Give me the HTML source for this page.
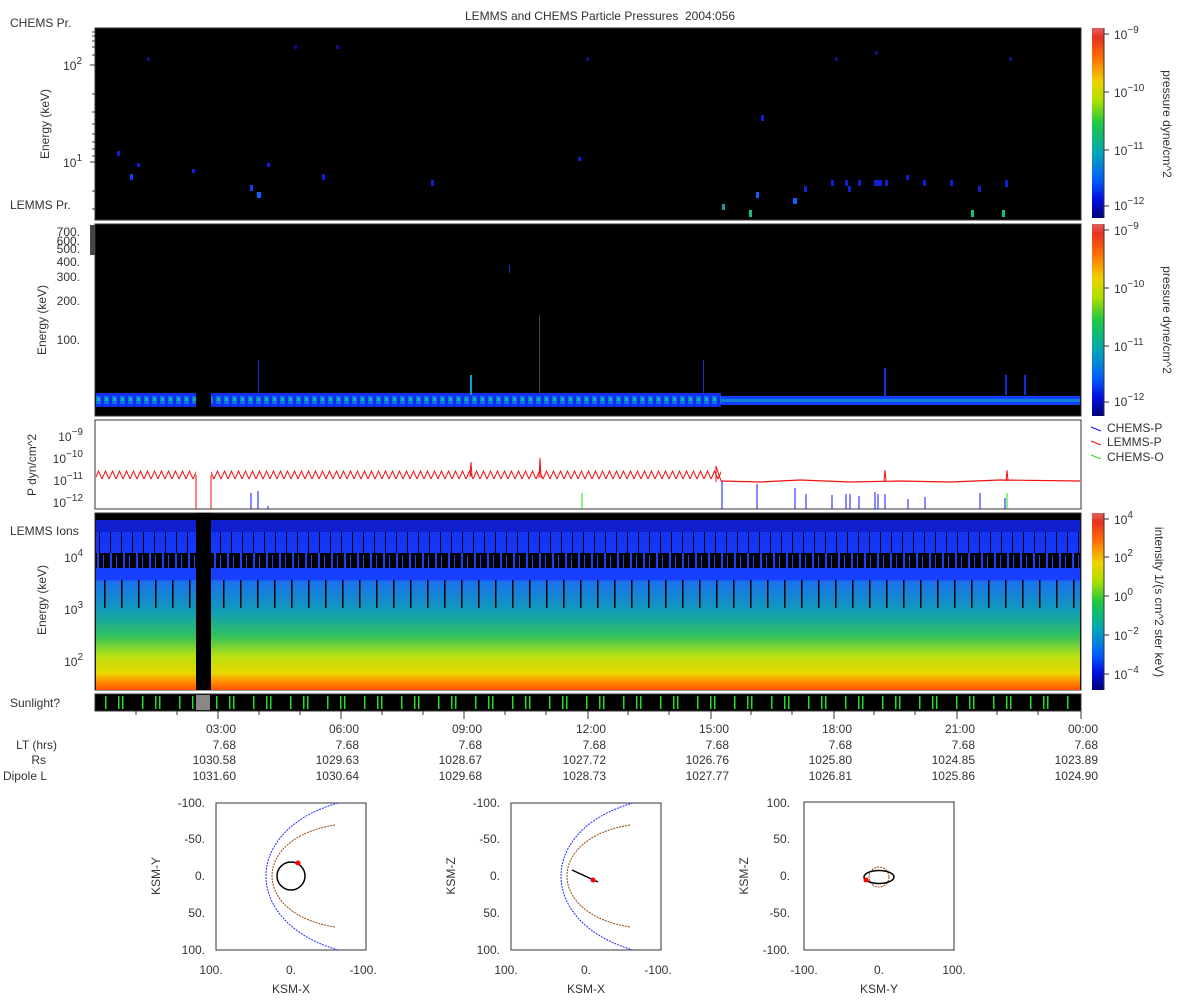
<!DOCTYPE html>
<html><head><meta charset="utf-8"><style>
html,body{margin:0;padding:0;background:#fff;}
svg{display:block;font-family:"Liberation Sans",sans-serif;}
text{fill:#333;font-size:12px;}
</style></head><body>
<svg width="1200" height="1000" viewBox="0 0 1200 1000" xmlns="http://www.w3.org/2000/svg">
<defs>
<linearGradient id="cb" x1="0" y1="1" x2="0" y2="0">
<stop offset="0" stop-color="#00007a"/><stop offset="0.1" stop-color="#0010e0"/><stop offset="0.2" stop-color="#0060ff"/><stop offset="0.35" stop-color="#00a8b0"/><stop offset="0.5" stop-color="#20c840"/><stop offset="0.62" stop-color="#b0e000"/><stop offset="0.72" stop-color="#f0d000"/><stop offset="0.84" stop-color="#ff7000"/><stop offset="0.95" stop-color="#e83020"/><stop offset="1" stop-color="#e06060"/>
</linearGradient>
<linearGradient id="ions" x1="0" y1="0" x2="0" y2="1">
<stop offset="0" stop-color="#1030f0"/><stop offset="0.35" stop-color="#1840ff"/><stop offset="0.36" stop-color="#1a70f0"/><stop offset="0.55" stop-color="#10a0b0"/><stop offset="0.68" stop-color="#30c060"/><stop offset="0.8" stop-color="#b8e010"/><stop offset="0.9" stop-color="#e8d800"/><stop offset="0.95" stop-color="#ff9000"/><stop offset="1" stop-color="#ff5000"/>
</linearGradient>
<pattern id="band" width="8" height="14" patternUnits="userSpaceOnUse" x="95" y="393">
<rect width="8" height="14" fill="#1030f0"/><rect x="1" y="3" width="5" height="8" fill="#1070e0"/><rect x="2" y="5" width="3" height="3" fill="#10b0b0"/>
</pattern>
<pattern id="zig" width="7" height="16" patternUnits="userSpaceOnUse" x="95" y="468">
<path d="M0,11 L3.5,3 L7,11" fill="none" stroke="#f01010" stroke-width="1"/>
</pattern>
<pattern id="blk" width="13" height="30" patternUnits="userSpaceOnUse" x="95" y="550">
<rect width="13" height="30" fill="#000"/><rect x="2" width="2" height="30" fill="#1840ff"/><rect x="8" y="5" width="1" height="20" fill="#1840ff"/>
</pattern>
<pattern id="vs" width="11" height="60" patternUnits="userSpaceOnUse" x="95" y="520">
<rect x="4" y="8" width="1" height="25" fill="#000"/>
</pattern>
<pattern id="vs2" width="17" height="90" patternUnits="userSpaceOnUse" x="95" y="520">
<rect x="9" y="60" width="1.5" height="28" fill="#000"/>
</pattern>
<pattern id="sun" width="37" height="17" patternUnits="userSpaceOnUse" x="100" y="694">
<rect x="5" y="2" width="1.5" height="13" fill="#20e020"/><rect x="18" y="2" width="1.5" height="13" fill="#20e020"/><rect x="22" y="2" width="1.5" height="13" fill="#20e020"/>
</pattern>
</defs>

<text x="600" y="20" text-anchor="middle" xml:space="preserve">LEMMS and CHEMS Particle Pressures  2004:056</text>

<!-- Panel 1 -->
<text x="10" y="27">CHEMS Pr.</text>
<rect x="95" y="28" width="986" height="192" fill="#000" stroke="#333"/>
<g fill="#1020d0">
<rect x="117" y="151" width="3" height="5"/><rect x="130" y="174" width="3" height="6" fill="#1040ff"/><rect x="137" y="163" width="3" height="4"/><rect x="147" y="57" width="3" height="4" fill="#0a1080"/><rect x="192" y="169" width="3" height="4"/><rect x="250" y="185" width="3" height="6" fill="#1040ff"/><rect x="257" y="192" width="4" height="6" fill="#1060ff"/><rect x="267" y="163" width="3" height="4"/><rect x="294" y="45" width="3" height="4" fill="#0a1080"/><rect x="322" y="174" width="3" height="6"/><rect x="336" y="45" width="3" height="4" fill="#0a1080"/><rect x="431" y="180" width="3" height="6"/><rect x="578" y="157" width="3" height="4"/><rect x="586" y="57" width="3" height="4" fill="#0a1080"/><rect x="722" y="204" width="3" height="6" fill="#10a0a0"/><rect x="749" y="210" width="3" height="7" fill="#10c080"/><rect x="756" y="192" width="3" height="6" fill="#1060ff"/><rect x="761" y="115" width="3" height="6"/><rect x="793" y="198" width="4" height="6" fill="#1060ff"/><rect x="804" y="186" width="3" height="6"/><rect x="831" y="180" width="3" height="6"/><rect x="835" y="57" width="3" height="4" fill="#0a1080"/><rect x="845" y="180" width="3" height="6"/><rect x="848" y="186" width="3" height="6"/><rect x="858" y="180" width="3" height="6"/><rect x="875" y="51" width="3" height="4" fill="#0a1080"/><rect x="874" y="180" width="8" height="6"/><rect x="885" y="180" width="3" height="6"/><rect x="906" y="175" width="3" height="5"/><rect x="923" y="180" width="3" height="6"/><rect x="950" y="180" width="3" height="6"/><rect x="971" y="210" width="3" height="7" fill="#10c080"/><rect x="978" y="186" width="3" height="6"/><rect x="1002" y="210" width="3" height="7" fill="#10c080"/><rect x="1005" y="180" width="3" height="7"/><rect x="1009" y="57" width="3" height="4" fill="#0a1080"/>
</g>
<g stroke="#333"><path d="M90,65h5M90,162h5M92,32h3M92,36h3M92,41h3M92,47h3M92,55h3M92,94h3M92,112h3M92,124h3M92,134h3M92,142h3M92,149h3M92,156h3M92,191h3M92,209h3"/></g>
<text x="82" y="70" text-anchor="end">10<tspan dy="-6" font-size="10">2</tspan></text>
<text x="82" y="167" text-anchor="end">10<tspan dy="-6" font-size="10">1</tspan></text>
<text transform="translate(49,124) rotate(-90)" text-anchor="middle">Energy (keV)</text>
<text x="10" y="209">LEMMS Pr.</text>

<!-- Panel 2 -->
<rect x="95" y="224" width="986" height="192" fill="#000" stroke="#333"/>
<rect x="96" y="393" width="100" height="14" fill="url(#band)"/>
<rect x="211" y="393" width="510" height="14" fill="url(#band)"/>
<rect x="721" y="396" width="359" height="9" fill="#1040ff"/>
<rect x="721" y="399" width="359" height="3" fill="#1080d0"/>
<g fill="#1030e0"><rect x="258" y="360" width="1" height="35"/><rect x="470" y="375" width="2" height="20" fill="#10a0d0"/><rect x="509" y="265" width="1" height="8"/><rect x="539" y="315" width="1" height="80" fill="#404060"/><rect x="884" y="368" width="2" height="28"/><rect x="1005" y="375" width="2" height="20"/><rect x="1024" y="375" width="2" height="20"/><rect x="703" y="360" width="1" height="35"/></g>
<rect x="90" y="225" width="5" height="30" fill="#444"/>
<g text-anchor="end">
<text x="80" y="236">700.</text><text x="80" y="245">600.</text><text x="80" y="253">500.</text><text x="80" y="266">400.</text><text x="80" y="281">300.</text><text x="80" y="305">200.</text><text x="80" y="344">100.</text>
</g>
<text transform="translate(46,320) rotate(-90)" text-anchor="middle">Energy (keV)</text>

<!-- Panel 3 -->
<rect x="95" y="420" width="986" height="89" fill="#fff" stroke="#333"/>
<rect x="96" y="468" width="100" height="16" fill="url(#zig)"/>
<rect x="211" y="468" width="510" height="16" fill="url(#zig)"/>
<path d="M721,481 L760,482 L800,480 L850,482 L900,481 L950,482 L1000,480 L1080,481" stroke="#f01010" stroke-width="1.2" fill="none"/>
<path d="M196,475 L196,509 M211,475 L211,509 M716,482 L716,466 L721,481 M539,478 L540,458 L541,478 M470,477 L471,462 L472,477 M884,481 L885,470 L886,481 M1006,481 L1007,470 L1008,481" stroke="#f01010" fill="none"/>
<g stroke="#1010ff"><path d="M251,509V493M258,509V491M268,509V506M722,509V481M757,509V484M795,509V488M806,509V494M832,509V495M846,509V494M850,509V494M859,509V496M875,509V492M878,509V494M885,509V494M908,509V499M925,509V497M980,509V493M1005,509V498"/></g>
<path d="M582,509V493 M1007,509V493" stroke="#20e020"/>
<g text-anchor="end">
<text x="83" y="441">10<tspan dy="-6" font-size="10">−9</tspan></text>
<text x="83" y="463">10<tspan dy="-6" font-size="10">−10</tspan></text>
<text x="83" y="485">10<tspan dy="-6" font-size="10">−11</tspan></text>
<text x="83" y="507">10<tspan dy="-6" font-size="10">−12</tspan></text>
</g>
<text transform="translate(36,465) rotate(-90)" text-anchor="middle">P dyn/cm^2</text>
<path d="M1091,427l10,4" stroke="#1010ff"/><text x="1107" y="432">CHEMS-P</text>
<path d="M1091,441l10,4" stroke="#f01010"/><text x="1107" y="446">LEMMS-P</text>
<path d="M1091,455l10,4" stroke="#20e020"/><text x="1107" y="461">CHEMS-O</text>

<!-- Panel 4 -->
<rect x="95" y="513" width="986" height="177" fill="#000" stroke="#333"/>
<rect x="96" y="520" width="984" height="170" fill="url(#ions)"/>
<rect x="96" y="520" width="984" height="12" fill="#1020d0"/>
<rect x="96" y="553" width="984" height="15" fill="url(#blk)"/>
<rect x="96" y="532" width="984" height="50" fill="url(#vs)"/>
<rect x="96" y="520" width="984" height="100" fill="url(#vs2)"/>
<rect x="196" y="513" width="15" height="177" fill="#000"/>
<text x="10" y="535">LEMMS Ions</text>
<g text-anchor="end">
<text x="83" y="562">10<tspan dy="-6" font-size="10">4</tspan></text>
<text x="83" y="614">10<tspan dy="-6" font-size="10">3</tspan></text>
<text x="83" y="666">10<tspan dy="-6" font-size="10">2</tspan></text>
</g>
<text transform="translate(46,600) rotate(-90)" text-anchor="middle">Energy (keV)</text>

<!-- Sunlight -->
<text x="10" y="707">Sunlight?</text>
<rect x="95" y="694" width="986" height="17" fill="#000" stroke="#333"/>
<rect x="96" y="696" width="984" height="13" fill="url(#sun)"/>
<rect x="196" y="695" width="14" height="15" fill="#888"/>

<!-- x ticks -->
<g stroke="#333">
<path d="M136,711v4M177,711v4M259,711v4M300,711v4M382,711v4M423,711v4M505,711v4M546,711v4M628,711v4M669,711v4M751,711v4M792,711v4M874,711v4M915,711v4M997,711v4M1038,711v4"/>
<path d="M218,711v8M341,711v8M464,711v8M588,711v8M711,711v8M834,711v8M957,711v8M1081,711v8"/>
</g>
<g text-anchor="end">
<text x="236" y="733">03:00</text><text x="359" y="733">06:00</text><text x="482" y="733">09:00</text><text x="606" y="733">12:00</text><text x="729" y="733">15:00</text><text x="852" y="733">18:00</text><text x="975" y="733">21:00</text><text x="1098" y="733">00:00</text>
<text x="236" y="749">7.68</text><text x="359" y="749">7.68</text><text x="482" y="749">7.68</text><text x="606" y="749">7.68</text><text x="729" y="749">7.68</text><text x="852" y="749">7.68</text><text x="975" y="749">7.68</text><text x="1098" y="749">7.68</text>
<text x="236" y="764">1030.58</text><text x="359" y="764">1029.63</text><text x="482" y="764">1028.67</text><text x="606" y="764">1027.72</text><text x="729" y="764">1026.76</text><text x="852" y="764">1025.80</text><text x="975" y="764">1024.85</text><text x="1098" y="764">1023.89</text>
<text x="236" y="780">1031.60</text><text x="359" y="780">1030.64</text><text x="482" y="780">1029.68</text><text x="606" y="780">1028.73</text><text x="729" y="780">1027.77</text><text x="852" y="780">1026.81</text><text x="975" y="780">1025.86</text><text x="1098" y="780">1024.90</text>
<text x="57" y="749">LT (hrs)</text><text x="46" y="764">Rs</text><text x="47" y="780">Dipole L</text>
</g>

<!-- Colorbars -->
<rect x="1092" y="28" width="12" height="190" fill="url(#cb)"/>
<rect x="1092" y="224" width="12" height="192" fill="url(#cb)"/>
<rect x="1092" y="513" width="12" height="177" fill="url(#cb)"/>
<g stroke="#333"><path d="M1104,28v190M1104,224v192M1104,513v177"/>
<path d="M1104,34h5M1104,92h5M1104,150h5M1104,206h5M1104,230h5M1104,288h5M1104,346h5M1104,402h5M1104,519h5M1104,557h5M1104,596h5M1104,635h5M1104,674h5"/></g>
<g font-size="12">
<text x="1114" y="39">10<tspan dy="-6" font-size="10">−9</tspan></text>
<text x="1114" y="97">10<tspan dy="-6" font-size="10">−10</tspan></text>
<text x="1114" y="155">10<tspan dy="-6" font-size="10">−11</tspan></text>
<text x="1114" y="210">10<tspan dy="-6" font-size="10">−12</tspan></text>
<text x="1114" y="235">10<tspan dy="-6" font-size="10">−9</tspan></text>
<text x="1114" y="293">10<tspan dy="-6" font-size="10">−10</tspan></text>
<text x="1114" y="351">10<tspan dy="-6" font-size="10">−11</tspan></text>
<text x="1114" y="406">10<tspan dy="-6" font-size="10">−12</tspan></text>
<text x="1114" y="524">10<tspan dy="-6" font-size="10">4</tspan></text>
<text x="1114" y="562">10<tspan dy="-6" font-size="10">2</tspan></text>
<text x="1114" y="601">10<tspan dy="-6" font-size="10">0</tspan></text>
<text x="1114" y="640">10<tspan dy="-6" font-size="10">−2</tspan></text>
<text x="1114" y="679">10<tspan dy="-6" font-size="10">−4</tspan></text>
</g>
<text transform="translate(1163,124) rotate(90)" text-anchor="middle">pressure dyne/cm^2</text>
<text transform="translate(1163,320) rotate(90)" text-anchor="middle">pressure dyne/cm^2</text>
<text transform="translate(1155,602) rotate(90)" text-anchor="middle">intensity 1/(s cm^2 ster keV)</text>

<!-- Orbit plot 1 -->
<g>
<rect x="216" y="803" width="150" height="147" fill="#fff" stroke="#333"/>
<path d="M338,803 C242,830 242,922 338,950" fill="none" stroke="#2030ff" stroke-dasharray="2,1"/>
<path d="M335,825 C251,838 251,914 335,927" fill="none" stroke="#8a4a10" stroke-dasharray="2,1"/>
<circle cx="291" cy="876" r="14" fill="none" stroke="#000" stroke-width="1.5"/>
<circle cx="298" cy="863" r="2.5" fill="#f00"/>
<g text-anchor="end"><text x="205" y="807">-100.</text><text x="205" y="843">-50.</text><text x="205" y="880">0.</text><text x="205" y="917">50.</text><text x="205" y="954">100.</text></g>
<g text-anchor="middle"><text x="211" y="974">100.</text><text x="291" y="974">0.</text><text x="363" y="974">-100.</text><text x="291" y="993">KSM-X</text></g>
<text transform="translate(160,876) rotate(-90)" text-anchor="middle">KSM-Y</text>
</g>
<!-- Orbit plot 2 -->
<g>
<rect x="511" y="803" width="150" height="147" fill="#fff" stroke="#333"/>
<path d="M633,803 C537,830 537,922 633,950" fill="none" stroke="#2030ff" stroke-dasharray="2,1"/>
<path d="M630,825 C546,838 546,914 630,927" fill="none" stroke="#8a4a10" stroke-dasharray="2,1"/>
<path d="M572,870 L598,882" stroke="#000" stroke-width="1.5"/>
<circle cx="593" cy="880" r="2.5" fill="#f00"/>
<g text-anchor="end"><text x="500" y="807">-100.</text><text x="500" y="843">-50.</text><text x="500" y="880">0.</text><text x="500" y="917">50.</text><text x="500" y="954">100.</text></g>
<g text-anchor="middle"><text x="506" y="974">100.</text><text x="586" y="974">0.</text><text x="658" y="974">-100.</text><text x="586" y="993">KSM-X</text></g>
<text transform="translate(455,876) rotate(-90)" text-anchor="middle">KSM-Z</text>
</g>
<!-- Orbit plot 3 -->
<g>
<rect x="804" y="802" width="150" height="148" fill="#fff" stroke="#333"/>
<ellipse cx="879" cy="877" rx="10" ry="10" fill="none" stroke="#8a4a10" stroke-dasharray="2,1"/>
<ellipse cx="879" cy="877" rx="15" ry="6.5" fill="none" stroke="#000" stroke-width="1.5"/>
<circle cx="866" cy="880" r="2.5" fill="#f00"/>
<g text-anchor="end"><text x="790" y="807">100.</text><text x="790" y="843">50.</text><text x="790" y="880">0.</text><text x="790" y="917">-50.</text><text x="790" y="954">-100.</text></g>
<g text-anchor="middle"><text x="804" y="974">-100.</text><text x="879" y="974">0.</text><text x="954" y="974">100.</text><text x="879" y="993">KSM-Y</text></g>
<text transform="translate(748,876) rotate(-90)" text-anchor="middle">KSM-Z</text>
</g>
</svg>
</body></html>
